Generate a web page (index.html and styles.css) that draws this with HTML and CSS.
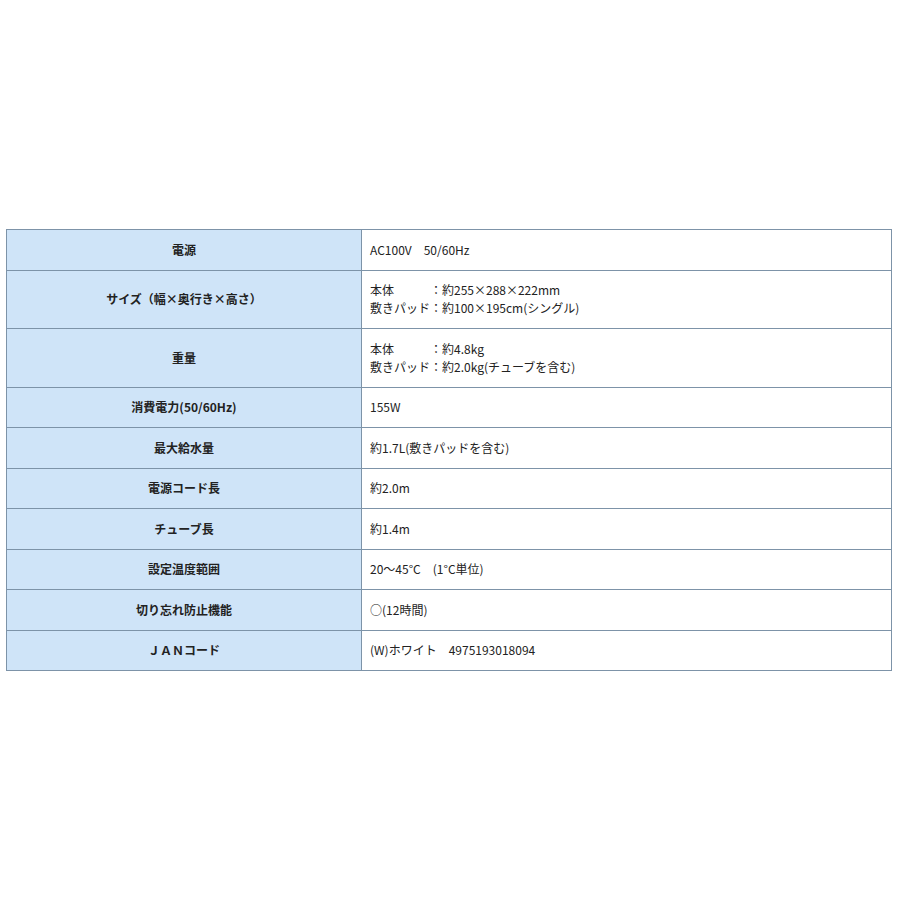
FILE: index.html
```html
<!DOCTYPE html>
<html lang="ja">
<head>
<meta charset="utf-8">
<link rel="stylesheet" href="styles.css">
</head>
<body>
<div class="wrap">
<table class="spec">
<tr><th>電源</th><td>AC100V　50/60Hz</td></tr>
<tr><th>サイズ（幅×奥行き×高さ）</th><td>本体　　　：約255×288×222mm<br>敷きパッド：約100×195cm(シングル)</td></tr>
<tr><th>重量</th><td>本体　　　：約4.8kg<br>敷きパッド：約2.0kg(チューブを含む)</td></tr>
<tr><th>消費電力(50/60Hz)</th><td>155W</td></tr>
<tr><th>最大給水量</th><td>約1.7L(敷きパッドを含む)</td></tr>
<tr><th>電源コード長</th><td>約2.0m</td></tr>
<tr><th>チューブ長</th><td>約1.4m</td></tr>
<tr><th>設定温度範囲</th><td>20～45°C　(1°C単位)</td></tr>
<tr><th>切り忘れ防止機能</th><td>○(12時間)</td></tr>
<tr><th>ＪＡＮコード</th><td>(W)ホワイト　4975193018094</td></tr>
</table>
</div>
</body>
</html>
```
FILE: styles.css
```css
html, body {
  margin: 0;
  padding: 0;
  background: #ffffff;
}
.wrap {
  padding: 229px 9px 0 6px;
}
.spec {
  width: 886px;
  border-collapse: collapse;
  font-family: "Noto Sans CJK JP", "Lato", sans-serif;
  font-size: 12px;
  line-height: 18px;
  color: #222222;
}
.spec th, .spec td {
  border: 1px solid #7d93a8;
  padding: 10.75px 8px;
}
.spec th {
  width: 338px;
  background: #cfe4f8;
  font-weight: bold;
  text-align: center;
}
.spec td {
  background: #ffffff;
  text-align: left;
  font-weight: normal;
}
```
